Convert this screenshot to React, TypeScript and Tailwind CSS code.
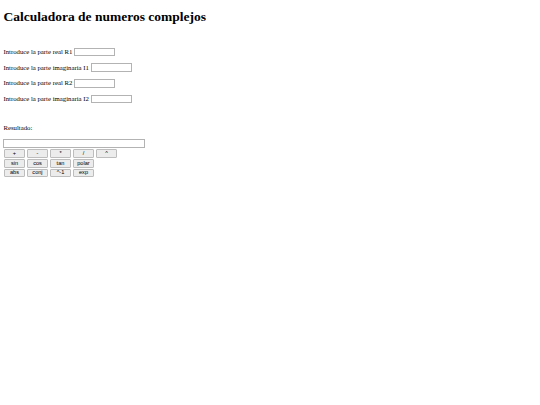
import React from "react";

const serif = { fontFamily: '"Liberation Serif", "Times New Roman", serif' };
const sans = { fontFamily: '"Liberation Sans", Arial, sans-serif' };

function Field({ label }: { label: string }) {
  return (
    <div className="flex h-[8.8px] items-center gap-[1.7px] text-[6.75px] leading-[7.8px]">
      <span className="whitespace-nowrap">{label}</span>
      <input
        type="text"
        className="box-border h-[8.6px] w-[41px] border border-[#b3b3b3] bg-white outline-none"
      />
    </div>
  );
}

function Btn({ label }: { label: string }) {
  return (
    <button
      type="button"
      style={sans}
      className="box-border flex h-[8.4px] w-[21px] items-center justify-center rounded-[1px] border border-[#bdbdbd] bg-[#ececec] p-0 text-[5.6px] leading-none text-black"
    >
      {label}
    </button>
  );
}

export default function App() {
  const rows = [
    ["+", "-", "*", "/", "^"],
    ["sin", "cos", "tan", "polar"],
    ["abs", "conj", "^-1", "exp"],
  ];
  return (
    <div style={serif} className="min-h-[405px] w-[540px] bg-white px-[3.4px] pt-[9.4px] text-black">
      <h1 className="text-[13.5px] font-bold leading-[15.5px]">Calculadora de numeros complejos</h1>
      <div className="mt-[22.9px] flex flex-col gap-[6.8px]">
        <Field label="Introduce la parte real R1" />
        <Field label="Introduce la parte imaginaria I1" />
        <Field label="Introduce la parte real R2" />
        <Field label="Introduce la parte imaginaria I2" />
      </div>
      <div className="mt-[20.4px] text-[6.75px] leading-[7.8px]">Resultado:</div>
      <input
        type="text"
        className="mt-[7.4px] box-border block h-[8.6px] w-[142px] border border-[#b3b3b3] bg-white outline-none"
      />
      <div className="mt-[1.6px] flex flex-col gap-[1.6px]">
        {rows.map((r, i) => (
          <div key={i} className="flex gap-[2px] pl-[0.6px]">
            {r.map((l) => (
              <Btn key={l} label={l} />
            ))}
          </div>
        ))}
      </div>
    </div>
  );
}
